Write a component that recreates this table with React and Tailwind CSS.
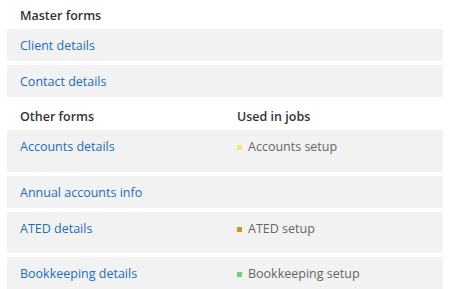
const masterForms = ["Client details", "Contact details"];

const otherForms = [
  { name: "Accounts details", job: "Accounts setup", color: "bg-[#fbe27d]", h: "h-[42px]" },
  { name: "Annual accounts info", job: null, h: "h-[32px]" },
  { name: "ATED details", job: "ATED setup", color: "bg-[#c79a1e]", h: "h-[41px]" },
  { name: "Bookkeeping details", job: "Bookkeeping setup", color: "bg-[#6fcd7c]", h: "h-[42px]" },
];

export default function App() {
  return (
    <div className="w-[451px] h-[289px] overflow-hidden bg-white px-[7px] font-['Open_Sans',sans-serif] text-[12.5px]">
      {/* Master forms */}
      <div className="h-[29px] pl-[13px] pt-[8px] leading-4 font-semibold text-[#333]">Master forms</div>
      <div className="flex w-[436px] flex-col gap-1">
        {masterForms.map((f) => (
          <div key={f} className="h-[32px] bg-[#f2f2f2] pl-[13px] pt-[9px] leading-4 text-[#1c6db5]">
            {f}
          </div>
        ))}
      </div>

      {/* Other forms */}
      <div className="mt-1 grid h-[29px] w-[436px] grid-cols-2 pt-[8px] leading-4 font-semibold text-[#333]">
        <div className="pl-[13px]">Other forms</div>
        <div className="pl-3">Used in jobs</div>
      </div>
      <div className="flex w-[436px] flex-col gap-1">
        {otherForms.map((f) => (
          <div key={f.name} className={`grid grid-cols-2 bg-[#f2f2f2] pt-[9px] leading-4 ${f.h}`}>
            <div className="pl-[13px] text-[#1c6db5]">{f.name}</div>
            <div className="pl-3">
              {f.job && (
                <div className="flex items-start gap-[6px] text-[#666]">
                  <span className={`mt-[6px] h-[5px] w-[5px] shrink-0 ${f.color}`}></span>
                  <span>{f.job}</span>
                </div>
              )}
            </div>
          </div>
        ))}
      </div>
    </div>
  );
}
